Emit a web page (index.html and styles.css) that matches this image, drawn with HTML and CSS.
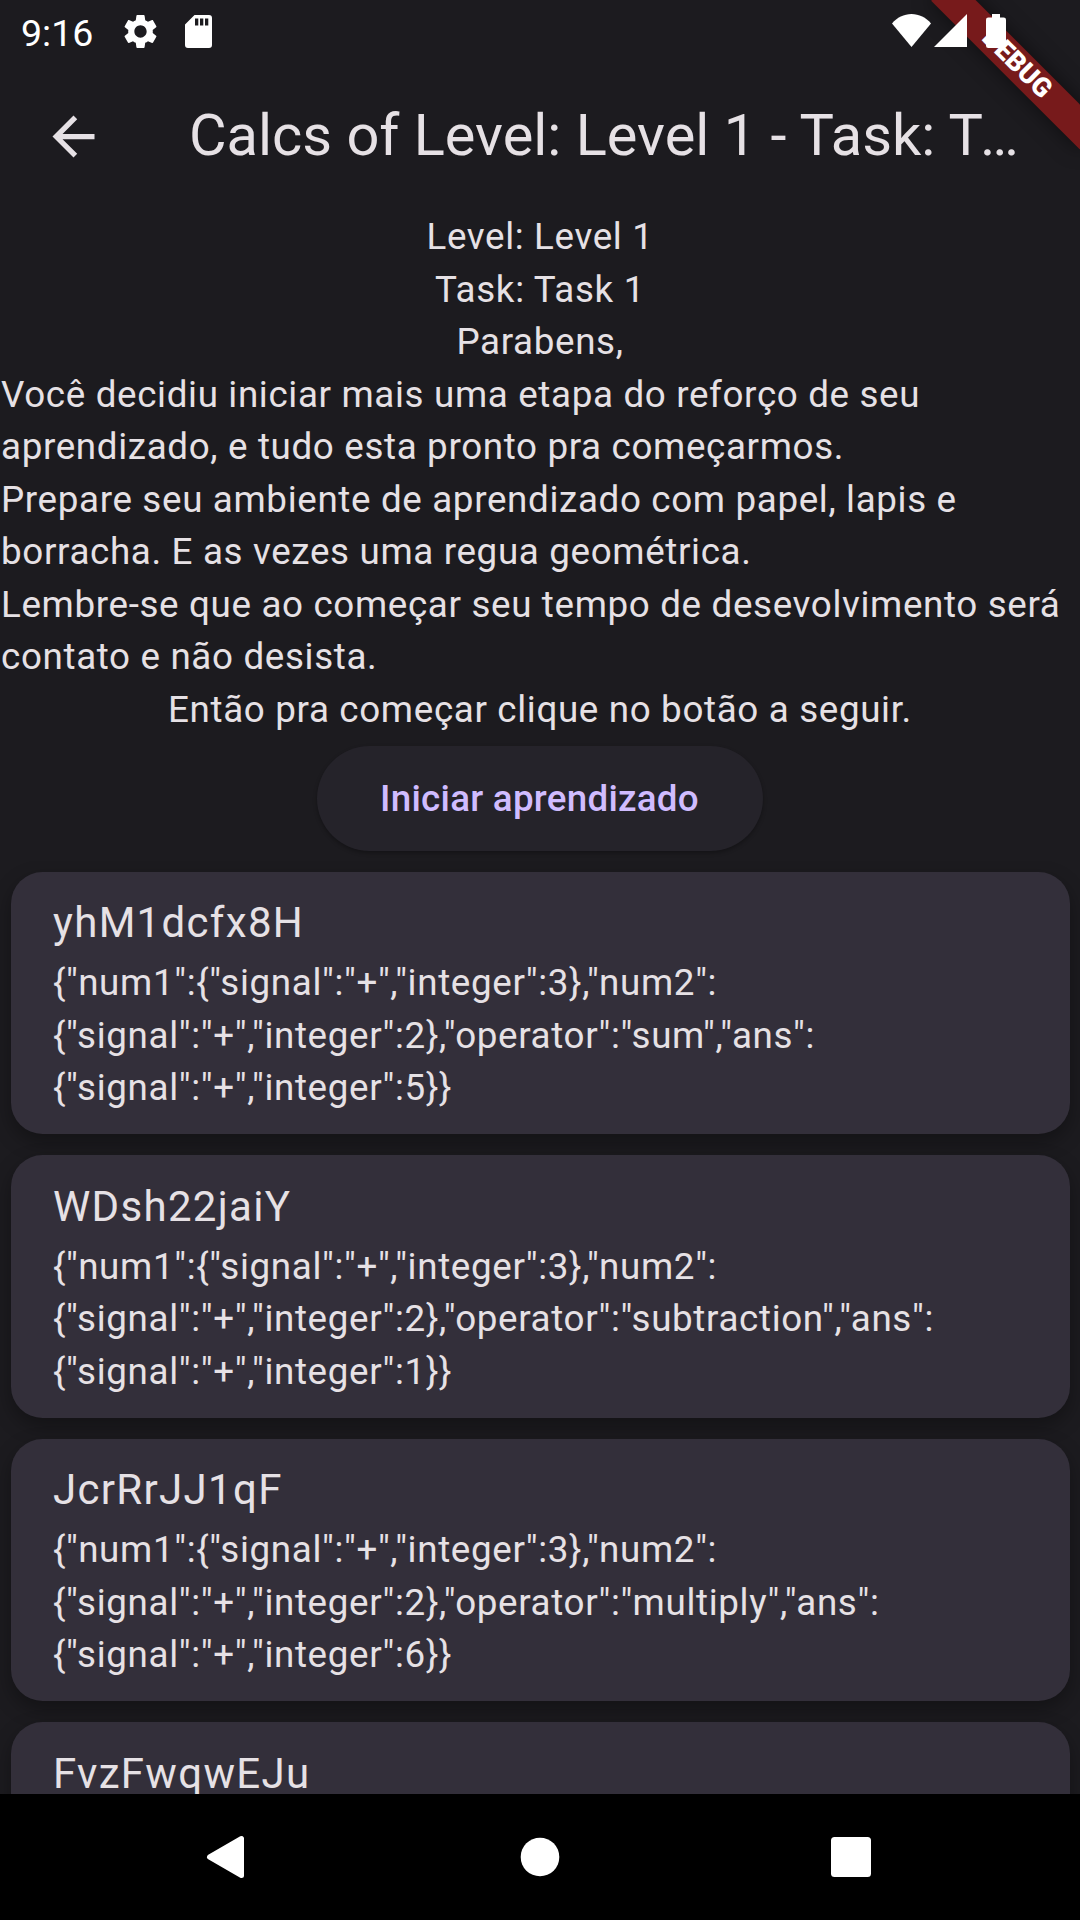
FILE: index.html
```html
<!DOCTYPE html>
<html lang="pt">
<head>
<meta charset="utf-8">
<title>Calcs</title>
<link rel="stylesheet" href="styles.css">
</head>
<body>
<div class="screen">
  <div class="banner-clip"><div class="banner">DEBUG</div></div>

  <div class="status-bar">
    <span class="clock">9:16</span>
    <svg class="gear" viewBox="0 0 24 24"><path d="M19.14 12.94c.04-.3.06-.61.06-.94 0-.32-.02-.64-.07-.94l2.03-1.58c.18-.14.23-.41.12-.61l-1.92-3.32c-.12-.22-.37-.29-.59-.22l-2.39.96c-.5-.38-1.03-.7-1.62-.94l-.36-2.54c-.04-.24-.24-.41-.48-.41h-3.84c-.24 0-.43.17-.47.41l-.36 2.54c-.59.24-1.13.57-1.62.94l-2.39-.96c-.22-.08-.47 0-.59.22L2.74 8.87c-.12.21-.08.47.12.61l2.03 1.58c-.05.3-.09.63-.09.94s.02.64.07.94l-2.03 1.58c-.18.14-.23.41-.12.61l1.92 3.32c.12.22.37.29.59.22l2.39-.96c.5.38 1.03.7 1.62.94l.36 2.54c.05.24.24.41.48.41h3.84c.24 0 .44-.17.47-.41l.36-2.54c.59-.24 1.13-.56 1.62-.94l2.39.96c.22.08.47 0 .59-.22l1.92-3.32c.12-.22.07-.47-.12-.61l-2.01-1.58zM12 15.6c-1.98 0-3.6-1.62-3.6-3.6s1.62-3.6 3.6-3.6 3.6 1.62 3.6 3.6-1.62 3.6-3.6 3.6z"/></svg>
    <svg class="sd" viewBox="0 0 27 33"><path fill-rule="evenodd" d="M9.500 0H24a3 3 0 0 1 3 3V30a3 3 0 0 1-3 3H3a3 3 0 0 1-3-3V9.500zM10 3.500V10.500h3.300V3.500zM15 3.500V10.500h3.300V3.500zM20 3.500V10.500h3.300V3.500z"/></svg>
    <span class="spacer"></span>
    <svg class="wifi" viewBox="0 0 39 33"><path d="M19.500 33 0 9.500C5 3.500 12 0 19.500 0S34 3.500 39 9.500z"/></svg>
    <svg class="signal" viewBox="0 0 33 33"><path d="M0 33H33V0z"/></svg>
    <svg class="battery" viewBox="0 0 20 34"><path d="M6 0h8v3.400h3.700A2.300 2.300 0 0 1 20 5.700V31.700A2.300 2.300 0 0 1 17.700 34H2.300A2.300 2.300 0 0 1 0 31.700V5.700A2.300 2.300 0 0 1 2.300 3.400H6z"/></svg>
  </div>

  <header class="app-bar">
    <svg class="back" viewBox="0 0 24 24"><path d="M20 11H7.830l5.590-5.590L12 4l-8 8 8 8 1.410-1.410L7.830 13H20v-2z"/></svg>
    <h1 class="title">Calcs of Level: Level 1 - Task: T<span class="ellipsis">…</span></h1>
  </header>

  <section class="intro">
    <p>Level: Level 1</p>
    <p>Task: Task 1</p>
    <p>Parabens,</p>
    <p class="wide">Você decidiu iniciar mais uma etapa do reforço de seu<br>aprendizado, e tudo esta pronto pra começarmos.</p>
    <p class="wide">Prepare seu ambiente de aprendizado com papel, lapis e<br>borracha. E as vezes uma regua geométrica.</p>
    <p class="wide">Lembre-se que ao começar seu tempo de desevolvimento será<br>contato e não desista.</p>
    <p>Então pra começar clique no botão a seguir.</p>
    <button class="start">Iniciar aprendizado</button>
  </section>

  <main class="list">
    <article class="card">
      <h2>yhM1dcfx8H</h2>
      <p>{"num1":{"signal":"+","integer":3},"num2":<br>{"signal":"+","integer":2},"operator":"sum","ans":<br>{"signal":"+","integer":5}}</p>
    </article>
    <article class="card">
      <h2>WDsh22jaiY</h2>
      <p>{"num1":{"signal":"+","integer":3},"num2":<br>{"signal":"+","integer":2},"operator":"subtraction","ans":<br>{"signal":"+","integer":1}}</p>
    </article>
    <article class="card">
      <h2>JcrRrJJ1qF</h2>
      <p>{"num1":{"signal":"+","integer":3},"num2":<br>{"signal":"+","integer":2},"operator":"multiply","ans":<br>{"signal":"+","integer":6}}</p>
    </article>
    <article class="card">
      <h2>FvzFwqwEJu</h2>
    </article>
  </main>

  <nav class="nav-bar">
    <svg viewBox="0 0 42 42"><path d="M33.500 2.500V39.500L1.500 21z" stroke="#fff" stroke-width="5" stroke-linejoin="round"/></svg>
    <svg viewBox="0 0 42 42"><circle cx="21" cy="21" r="19.300"/></svg>
    <svg viewBox="0 0 42 42"><rect x="1" y="1" width="40" height="40" rx="3.500"/></svg>
  </nav>
</div>
</body>
</html>
```
FILE: styles.css
```css
* { box-sizing: border-box; margin: 0; padding: 0; }

body {
  background: #1c1b1f;
  color: #e6e1e5;
  font-family: Roboto, sans-serif;
}

svg { display: block; fill: #fff; flex: none; overflow: visible; }

.screen {
  position: relative;
  display: flex;
  flex-direction: column;
  width: 1080px;
  height: 1920px;
  overflow: hidden;
  background: #1c1b1f;
}

.banner-clip {
  position: absolute;
  top: 0;
  right: 0;
  width: 260px;
  height: 260px;
  overflow: hidden;
}

.banner {
  position: absolute;
  top: 73.5px;
  left: 155px;
  width: 210px;
  height: 31.5px;
  transform: rotate(45deg);
  transform-origin: 105px -73.5px;
  background: #771a1b;
  box-shadow: 0 0 20px rgba(0, 0, 0, .5);
  color: #fff;
  font-size: 26.8px;
  font-weight: 900;
  line-height: 31.5px;
  text-align: center;
}

.status-bar {
  position: relative;
  display: flex;
  align-items: flex-start;
  height: 63px;
  padding: 0 60px 0 21px;
}

.clock {
  width: 102px;
  color: #fff;
  font-size: 37.5px;
  line-height: 66px;
}

.gear { width: 41px; height: 41px; margin: 11px 0 0 -3.5px; }
.sd { width: 27px; height: 33px; margin: 15px 0 0 24.5px; }
.spacer { flex: 1; }
.wifi { width: 39px; height: 33px; margin-top: 14px; }
.signal { width: 33px; height: 33px; margin: 14px 0 0 3px; }
.battery { width: 20px; height: 34px; margin: 14px 14px 0 19px; }

.app-bar {
  display: flex;
  align-items: center;
  height: 147px;
  padding: 0 42px 1px;
}

.back { width: 63px; height: 63px; fill: #e6e1e5; }

.title {
  flex: 1;
  min-width: 0;
  margin-left: 84px;
  font-size: 57.75px;
  font-weight: 400;
  line-height: 73.5px;
  white-space: nowrap;
}

.ellipsis { margin-left: -3px; }

.intro {
  display: flex;
  flex-direction: column;
  align-items: center;
  height: 651px;
  padding-top: 1px;
}

.intro p, .card p {
  font-size: 36.75px;
  line-height: 52.5px;
  letter-spacing: .656px;
  white-space: nowrap;
}

.intro .wide { width: 100%; padding-left: 1px; }

.start {
  width: 446px;
  height: 105px;
  margin-top: 9.5px;
  padding: 2.5px 1px 0 0;
  border: 0;
  border-radius: 53px;
  background: #25232a;
  box-shadow: 0 2px 4px rgba(0, 0, 0, .3);
  color: #d0bcff;
  font: 500 36.75px/52.5px Roboto, sans-serif;
  letter-spacing: .2625px;
}

.list {
  display: flex;
  flex: 1;
  flex-direction: column;
  gap: 21px;
  min-height: 0;
  padding: 10.5px;
  overflow: hidden;
}

.card {
  flex: none;
  height: 262.5px;
  padding: 19.5px 42.5px;
  border-radius: 31.5px;
  background: #332f3a;
  box-shadow: 0 8px 20px rgba(0, 0, 0, .32);
}

.card h2 {
  margin-bottom: 3px;
  font-size: 42px;
  font-weight: 400;
  line-height: 63px;
  letter-spacing: 1.3125px;
}

.nav-bar {
  position: relative;
  display: flex;
  align-items: center;
  justify-content: center;
  gap: 269px;
  height: 126px;
  background: #000;
}

.nav-bar svg { width: 42px; height: 42px; }
```
